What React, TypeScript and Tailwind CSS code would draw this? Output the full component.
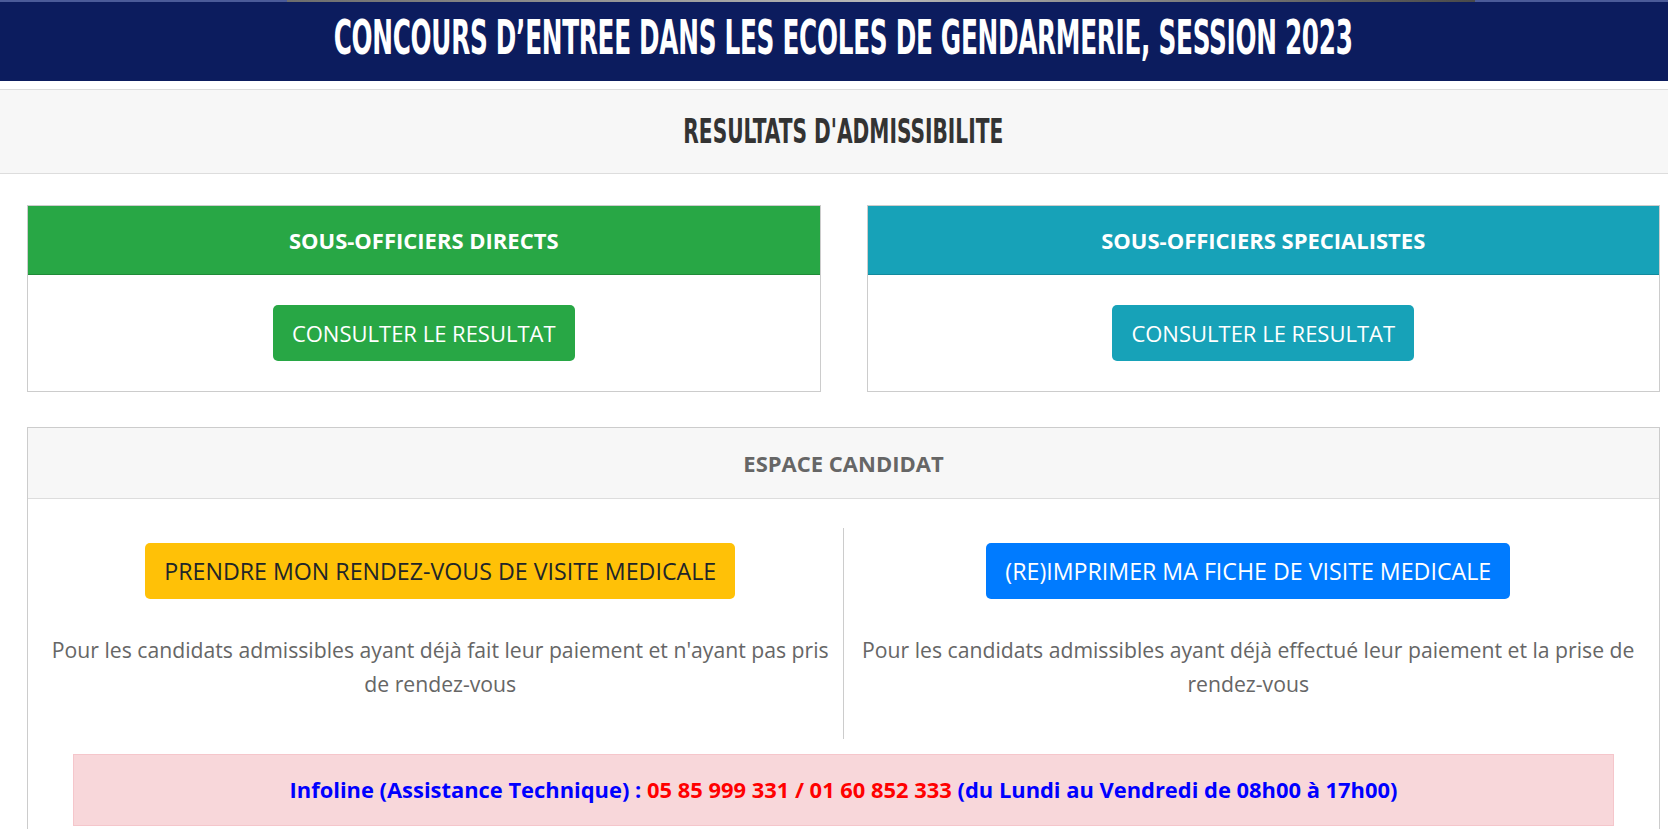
const body = { fontFamily: '"Open Sans", "Noto Sans", sans-serif' };
const narrow = { fontFamily: '"Liberation Sans Narrow", "DejaVu Sans Condensed", "DejaVu Sans", sans-serif' };

function ResultCard({ title, color, border }: { title: string; color: string; border: string }) {
  return (
    <div className="border border-[#cccccc] bg-white">
      <div className={`h-[69px] flex items-center justify-center border-b ${color} ${border}`}>
        <span className="text-white font-bold text-[22px]">{title}</span>
      </div>
      <div className="h-[116px] flex items-start justify-center pt-[30px]">
        <button className={`${color} text-white text-[22px] leading-[30px] px-[19px] py-[13px] rounded-[5px]`}>
          CONSULTER LE RESULTAT
        </button>
      </div>
    </div>
  );
}

export default function App() {
  return (
    <div className="w-full overflow-hidden bg-white" style={body}>
      <div className="w-[1687px]">
        {/* thin banner photo edge */}
        <div className="flex h-[2px]">
          <div className="w-[287px] bg-[#4b5b99]" />
          <div className="flex-1 bg-gradient-to-r from-[#6d6d6d] via-[#b8b8b8] to-[#4a4a4a]" />
          <div className="w-[212px] bg-[#4b5b99]" />
        </div>

        {/* Title bar */}
        <div className="h-[79px] bg-[#0c1c5e] flex items-center justify-center pb-[9px] overflow-hidden">
          <h1
            className="inline-block whitespace-nowrap text-white font-bold text-[48px] leading-none tracking-[-0.5px] scale-x-[0.573]"
            style={narrow}
          >
            CONCOURS D’ENTREE DANS LES ECOLES DE GENDARMERIE, SESSION 2023
          </h1>
        </div>

        {/* Section header */}
        <div className="mt-[8px] h-[85px] bg-[#f7f7f7] border-y border-[#dddddd] flex items-center justify-center">
          <h2
            className="inline-block whitespace-nowrap text-[#333333] font-bold text-[33px] leading-none scale-x-[0.68]"
            style={narrow}
          >
            RESULTATS D'ADMISSIBILITE
          </h2>
        </div>

        <div className="px-[27px]">
          {/* Result cards */}
          <div className="mt-[31px] grid grid-cols-2 gap-[46px]">
            <ResultCard title="SOUS-OFFICIERS DIRECTS" color="bg-[#28a745]" border="border-[#1f8a37]" />
            <ResultCard title="SOUS-OFFICIERS SPECIALISTES" color="bg-[#17a2b8]" border="border-[#128a9d]" />
          </div>

          {/* Espace candidat */}
          <div className="mt-[35px] border border-[#cccccc]">
            <div className="h-[71px] bg-[#f7f7f7] border-b border-[#dddddd] flex items-center justify-center">
              <span className="text-[#666666] font-bold text-[22px]">ESPACE CANDIDAT</span>
            </div>

            <div className="pt-[29px] pb-[20px]">
              <div className="grid grid-cols-2">
                <div className="border-r border-[#cccccc] flex flex-col items-center pt-[15px] pb-[38px] pl-[23px] pr-[13px]">
                  <button className="bg-[#ffc107] text-[#212529] text-[23.2px] leading-[30px] px-[19px] py-[13px] rounded-[5px]">
                    PRENDRE MON RENDEZ-VOUS DE VISITE MEDICALE
                  </button>
                  <p className="mt-[34px] text-center text-[#666666] text-[21.2px] leading-[34px]">
                    Pour les candidats admissibles ayant déjà fait leur paiement et n'ayant pas pris de rendez-vous
                  </p>
                </div>
                <div className="flex flex-col items-center pt-[15px] pb-[38px] pl-[15px] pr-[21px]">
                  <button className="bg-[#007bff] text-white text-[23.2px] leading-[30px] px-[19px] py-[13px] rounded-[5px]">
                    (RE)IMPRIMER MA FICHE DE VISITE MEDICALE
                  </button>
                  <p className="mt-[34px] text-center text-[#666666] text-[21.2px] leading-[34px]">
                    Pour les candidats admissibles ayant déjà effectué leur paiement et la prise de rendez-vous
                  </p>
                </div>
              </div>

              <div className="mt-[15px] mx-[45px] h-[72px] bg-[#f8d7da] border border-[#f5c6cb] flex items-center justify-center">
                <p className="font-bold text-[21.9px] text-[#0000ff] whitespace-nowrap">
                  Infoline (Assistance Technique) :{" "}
                  <span className="text-[#ff0000]">05 85 999 331 / 01 60 852 333</span>{" "}
                  (du Lundi au Vendredi de 08h00 à 17h00)
                </p>
              </div>
            </div>
          </div>
        </div>
      </div>
    </div>
  );
}
